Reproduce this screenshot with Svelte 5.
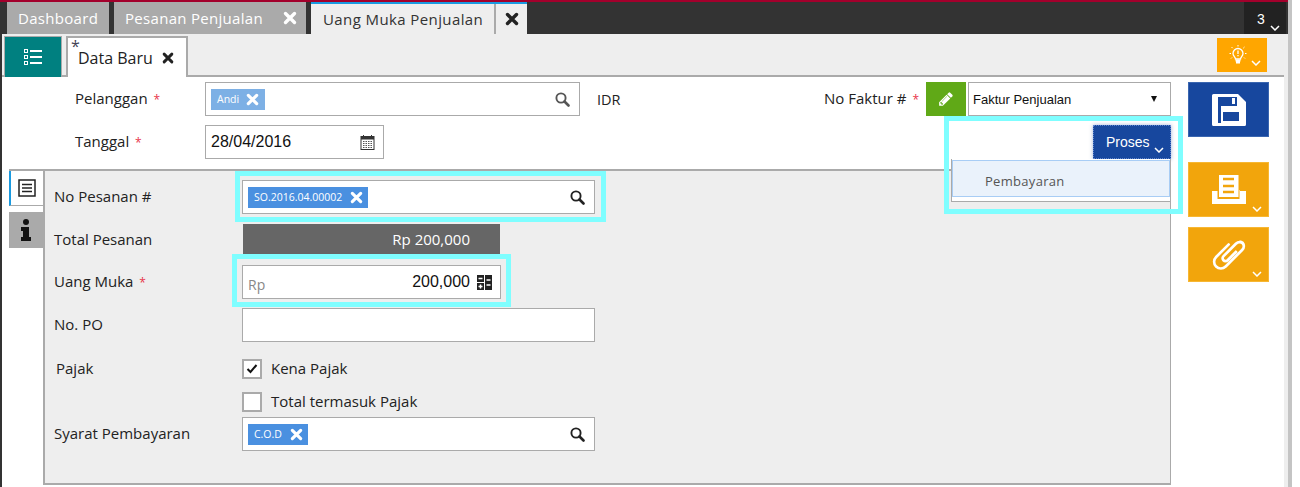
<script>
  const chev = 'M0 0l4 4 4-4';
</script>

{#snippet x(size, color)}
  <svg class="ico" width={size} height={size} viewBox="0 0 14 14"><path d="M2.500 2.500l9 9M11.500 2.500l-9 9" stroke={color} stroke-width="3.400" stroke-linecap="round" fill="none"/></svg>
{/snippet}
{#snippet chevron(cls)}
  <svg class="chev {cls}" width="10" height="6" viewBox="-1 -1 10 6"><path d={chev} stroke="#fff" stroke-width="1.500" fill="none"/></svg>
{/snippet}
{#snippet search(color)}
  <svg class="ico" width="15" height="15" viewBox="0 0 15 15"><circle cx="6" cy="6" r="4.600" stroke={color} stroke-width="1.900" fill="none"/><path d="M9.500 9.500l4 4" stroke={color} stroke-width="2.600" stroke-linecap="round"/></svg>
{/snippet}

<div class="frame">
  <div class="strip"></div>
  <header class="tabbar">
    <div class="tab t1">Dashboard</div>
    <div class="tab t2"><span>Pesanan Penjualan</span>{@render x(14, '#fff')}</div>
    <div class="active">
      <div class="a-label">Uang Muka Penjualan</div>
      <div class="a-close">{@render x(14, '#222')}</div>
    </div>
    <div class="count"><span>3</span>{@render chevron('c-count')}</div>
  </header>

  <div class="body">
    <div class="subbar">
      <button class="teal" aria-label="Daftar">
        <svg width="20" height="18" viewBox="0 0 20 18">
          <g fill="none" stroke="#fff"><rect x="1.500" y="1.500" width="3" height="3"/><rect x="1.500" y="7.500" width="3" height="3"/><rect x="1.500" y="13.500" width="3" height="3"/></g>
          <path d="M7 3h12M7 9h12M7 15h12" stroke="#fff" stroke-width="2"/>
        </svg>
      </button>
      <div class="subtab"><sup>*</sup><span>Data Baru</span>{@render x(12, '#222')}</div>
      <div class="bulb">
        <svg width="20" height="20" viewBox="0 0 20 20" fill="none" stroke="#fff">
          <path d="M7.500 14c0-2-2.500-3-2.500-5.500a5 5 0 0 1 10 0c0 2.500-2.500 3.500-2.500 5.500z" stroke-width="1.300"/>
          <path d="M10 5.500v3.500M10 10v1.300" stroke-width="1.300"/>
          <path d="M7.500 15.500h5M8 17.500h4" stroke-width="1.800"/>
          <path d="M10 0v1.500M3.500 2l1.200 1.200M16.500 2l-1.200 1.200M1.500 8.500h1.500M17 8.500h1.500M3 13.500l1-1M17 13.500l-1-1" stroke-width="1"/>
        </svg>
        {@render chevron('c-bulb')}
      </div>
    </div>

    <div class="content">
      <div class="main">
        <div class="toprow">
          <label class="tlabel">Pelanggan <em>*</em></label>
          <div class="box cust">
            <span class="tag light">Andi {@render x(13, '#fff')}</span>
            {@render search('#555')}
          </div>
          <span class="idr">IDR</span>
          <label class="nof">No Faktur # <em>*</em></label>
          <button class="pen" aria-label="Ubah">
            <svg width="16" height="16" viewBox="0 0 1792 1792"><path fill="#fff" d="M491 1536l91-91-235-235-91 91v107h128v128h107zm523-928q0-22-22-22-10 0-17 7l-542 542q-7 7-7 17 0 22 22 22 10 0 17-7l542-542q7-7 7-17zm-54-192l416 416-832 832h-416v-416zm683 96q0 53-37 90l-166 166-416-416 166-165q36-38 90-38 53 0 91 38l235 234q37 39 37 91z"/></svg>
          </button>
          <div class="box sel"><span>Faktur Penjualan</span><i class="tri"></i></div>
        </div>

        <div class="toprow second">
          <label class="tlabel">Tanggal <em>*</em></label>
          <div class="box date">
            <span>28/04/2016</span>
            <svg width="15" height="15" viewBox="0 0 15 15">
              <rect x="1" y="1.500" width="13" height="13" fill="#fff" stroke="#333"/>
              <rect x="1" y="1" width="13" height="3.500" fill="#333"/>
              <path d="M3.500 0v2M11.500 0v2" stroke="#333"/>
              <path d="M3 6.500h9M3 8.500h9M3 10.500h9M3 12.500h9" stroke="#555" stroke-dasharray="1.500 1"/>
            </svg>
          </div>
          <div class="proses-wrap">
            <button class="proses">Proses {@render chevron('c-proses')}</button>
            <div class="menu"><div class="item">Pembayaran</div></div>
            <div class="hl hl-proses"></div>
          </div>
        </div>

        <div class="panelwrap">
          <nav class="vtabs">
            <div class="vt on">
              <svg width="18" height="18" viewBox="0 0 18 18" fill="none" stroke="#222"><rect x="1" y="1" width="16" height="16" stroke-width="1.500"/><path d="M4 5.500h10M4 9h10M4 12.500h10" stroke-width="1.400"/></svg>
            </div>
            <div class="vt off">
              <svg width="12" height="22" viewBox="0 0 12 22" fill="#111"><circle cx="6" cy="3" r="3"/><path d="M1 8h8v10h2v4H1v-4h2v-6H1z"/></svg>
            </div>
          </nav>
          <section class="panel">
            <div class="row r1">
              <label class="plabel">No Pesanan #</label>
              <div class="hlwrap">
                <div class="box wide">
                  <span class="tag so">SO.2016.04.00002 {@render x(13, '#fff')}</span>
                  {@render search('#222')}
                </div>
                <div class="hl hl-so"></div>
              </div>
            </div>
            <div class="row r2">
              <label class="plabel">Total Pesanan</label>
              <div class="total">Rp 200,000</div>
            </div>
            <div class="row r3">
              <label class="plabel">Uang Muka <em>*</em></label>
              <div class="hlwrap">
                <div class="box money">
                  <span class="rp">Rp</span>
                  <span class="amt">200,000</span>
                  <svg width="15" height="15" viewBox="0 0 15 15" fill="#222"><rect x="0" y="0" width="7" height="7"/><rect x="8" y="0" width="7" height="15"/><rect x="0" y="8" width="7" height="7"/><path d="M1.500 3.500h4M9.500 5h4M9.500 10h4M1.500 11.500h4M3.500 9.500v4" stroke="#fff" stroke-width="1.500"/></svg>
                </div>
                <div class="hl hl-um"></div>
              </div>
            </div>
            <div class="row r4">
              <label class="plabel">No. PO</label>
              <div class="box wide"></div>
            </div>
            <div class="row r5">
              <label class="plabel pj">Pajak</label>
              <span class="cb"><svg width="12" height="10" viewBox="0 0 12 10"><path d="M1.500 5l3 3 6-7" stroke="#111" stroke-width="2" fill="none"/></svg></span>
              <span class="cbt">Kena Pajak</span>
            </div>
            <div class="row r6">
              <span class="plabel"></span>
              <span class="cb"></span>
              <span class="cbt">Total termasuk Pajak</span>
            </div>
            <div class="row r7">
              <label class="plabel">Syarat Pembayaran</label>
              <div class="box wide">
                <span class="tag cod">C.O.D {@render x(13, '#fff')}</span>
                {@render search('#222')}
              </div>
            </div>
          </section>
        </div>
      </div>

      <aside class="side">
        <button class="act save" aria-label="Simpan">
          <svg width="34" height="32" viewBox="0 0 34 32">
            <path fill="#fff" d="M1.500 0H26l8 8v22.500a1.500 1.500 0 0 1-1.500 1.500h-31A1.500 1.500 0 0 1 0 30.500v-29A1.500 1.500 0 0 1 1.500 0z"/>
            <path fill="#17479e" d="M6 3h19v9h5v17H6z"/>
            <path fill="#fff" d="M9 12h21v17H9z"/>
            <rect x="11" y="18" width="16" height="9" fill="#17479e"/>
            <rect x="20" y="4" width="3" height="6" fill="#fff"/>
          </svg>
        </button>
        <button class="act print" aria-label="Cetak">
          <svg width="34" height="29" viewBox="0 0 34 29">
            <path fill="#fff" d="M0 16h6v-1h22v1h6v13H0z"/>
            <rect x="5.500" y="0" width="22" height="24" fill="#f2a50c"/>
            <rect x="7" y="0" width="19.500" height="22" fill="#fff"/>
            <path d="M11 4h11M11 11h11M11 17h11" stroke="#f2a50c" stroke-width="2.400"/>
          </svg>
          {@render chevron('c-act')}
        </button>
        <button class="act clip" aria-label="Lampiran">
          <svg width="38" height="38" viewBox="0 0 1792 1792"><path fill="#fff" transform="matrix(0 -1 1 0 0 1792)" d="M1596 1385q0 117-79 196t-196 79q-135 0-235-100l-777-776q-113-115-113-271 0-159 110-270t269-111q158 0 273 113l605 606q10 10 10 22 0 16-30.500 46.500t-46.500 30.500q-13 0-23-10l-606-607q-79-77-181-77-106 0-179 75t-73 181q0 105 76 181l776 777q63 63 134 63 57 0 95-38t38-95q0-74-63-134l-581-582q-26-24-60-24-29 0-48 19t-19 48q0 32 25 59l410 410q10 10 10 22 0 16-31 47t-47 31q-12 0-22-10l-410-410q-63-61-63-149 0-82 57-139t139-57q88 0 149 63l581 581q100 98 100 235z"/></svg>
          {@render chevron('c-act')}
        </button>
      </aside>
    </div>
  </div>
</div>

<style>
  :global(body) { margin: 0; background: #fff; }
  * { box-sizing: border-box; }
  .frame {
    width: 1292px; height: 487px; overflow: hidden;
    border-right: 4px solid #c4c4c4;
    font-family: "Open Sans", "Noto Sans", sans-serif; font-size: 15px; color: #222;
    background: #fff;
  }
  .strip { height: 2px; background: #a3002c; }
  .tabbar { height: 32px; background: #333; display: flex; padding-left: 7px; }
  .tab {
    background: #aaa; color: #fff; height: 32px; display: flex; align-items: center;
    font-size: 15px; letter-spacing: .3px; padding-left: 11px;
  }
  .t1 { width: 102px; }
  .t2 { width: 192px; margin-left: 5px; gap: 20px; }
  .active { display: flex; margin-left: 5px; height: 32px; background: #eee; border-top: 2px solid #1a9ae0; }
  .a-label { width: 183px; padding-left: 12px; font-size: 15px; letter-spacing: .4px; color: #333; line-height: 30px; }
  .a-close { width: 33px; border-left: 2px solid #aaa; display: flex; align-items: center; justify-content: center; }
  .count {
    margin-left: auto; width: 42px; background: #222; color: #fff; font-size: 14px;
    position: relative; margin-right: 2px; padding: 9px 0 0 13px; line-height: 16px;
    font-family: "Liberation Sans", sans-serif;
  }
  .body { border-left: 2px solid #333; border-right: 4px solid #eee; height: 453px; }
  .subbar {
    height: 43px; background: #eee; border-bottom: 2px solid #aaa; display: flex; padding: 2px 0 0 2px;
  }
  .teal {
    width: 58px; height: 41px; background: #008080; border: 1px solid #aaa; border-width: 1px 1px 0; padding: 0;
    display: flex; align-items: center; justify-content: center;
  }
  .subtab {
    width: 122px; height: 41px; margin-left: 4px; background: #fff;
    border: 2px solid #aaa; border-bottom: 0; display: flex; align-items: center; font-size: 16px; padding-left: 4px; position: relative;
  }
  .subtab sup { position: absolute; left: 3px; top: -3px; font-size: 16px; color: #445; }
  .subtab span { margin-left: 6px; margin-right: 9px; }
  .bulb {
    margin-left: auto; margin-right: 17px; margin-top: 2px; width: 50px; height: 34px; background: #ffa600;
    display: flex; align-items: center; padding-left: 11px; position: relative;
  }
  .content { display: flex; height: 410px; }
  .main { width: 1169px; padding-top: 5px; }
  .toprow { display: flex; align-items: center; height: 34px; padding-left: 73px; }
  .second { margin-top: 9px; }
  label, .plabel { font-size: 15px; }
  em { color: #e8344a; font-style: normal; font-size: 12px; margin-left: 2px; }
  .tlabel { width: 130px; padding-bottom: 2px; }
  .box {
    height: 34px; background: #fff; border: 1px solid #aaa; display: flex; align-items: center; justify-content: space-between;
  }
  .cust { width: 375px; padding: 0 9px 0 5px; }
  .idr { margin-left: 17px; font-size: 14.500px; }
  .nof { margin-left: auto; margin-right: 7px; padding-bottom: 2px; }
  .pen { width: 40px; height: 34px; background: #60a917; border: 0; padding: 0; display: flex; align-items: center; justify-content: center; }
  .sel { width: 203px; margin-left: 2px; padding: 0 13px 0 4px; font-family: "Liberation Sans", sans-serif; font-size: 13px; color: #111; }
  .tri { width: 0; height: 0; border: 3.500px solid transparent; border-top: 6px solid #111; border-bottom: 0; }
  .date { width: 179px; padding: 0 8px 0 5px; font-family: "Liberation Sans", sans-serif; font-size: 16px; color: #111; }
  .proses-wrap { margin-left: auto; position: relative; height: 34px; }
  .proses {
    width: 78px; height: 34px; background: #17479e; color: #fff; border: 1px dotted #5f86d0; padding: 0 0 0 12px;
    font-family: "Liberation Sans", sans-serif; font-size: 14px; text-align: left; position: relative;
    box-shadow: 0 0 4px rgba(23, 71, 158, .4);
  }
  .menu {
    position: absolute; top: 34px; right: 0; width: 220px; height: 43px; background: #fff;
    border: 1px solid #aaa; border-top: 0; padding-top: 1px; z-index: 2;
  }
  .item {
    height: 37px; background: #eaf2fb; border: 1px solid #a8cdf5; color: #555; font-size: 13px; letter-spacing: .3px;
    padding: 11px 0 0 32px;
  }
  .hl { position: absolute; border: 5px solid #7ffeff; pointer-events: none; z-index: 3; }
  .hl-proses { left: -149px; right: -12px; top: -9px; bottom: -55px; }
  .hlwrap { position: relative; }
  .hl-so { left: -7px; right: -11px; top: -9px; bottom: -8px; }
  .hl-um { left: -10px; right: -10px; top: -11px; bottom: -8px; }

  .panelwrap { display: flex; margin-top: 10px; padding-left: 7px; height: 316px; position: relative; }
  .vtabs { width: 34px; border-top: 2px solid #aaa; }
  .vt { width: 34px; display: flex; align-items: center; justify-content: center; }
  .on { height: 35px; background: #fff; border-left: 2px solid #1a9ae0; border-bottom: 1px solid #aaa; }
  .off { height: 36px; margin-top: 6px; background: #aaa; }
  .panel {
    width: 1128px; height: 316px; background: #eee; border: 2px solid #aaa; border-width: 2px 1px 2px 2px; padding: 9px 0 0 9px;
  }
  .row { display: flex; align-items: center; }
  .plabel { width: 188px; flex: none; padding-bottom: 2px; }
  .pj { padding-left: 2px; }
  .wide { width: 353px; padding: 0 9px 0 5px; }
  .total {
    width: 257px; height: 31px; margin-left: 1px; background: #666; color: #fff; text-align: right; padding: 5px 30px 0 0; font-size: 15px; line-height: 20px;
  }
  .money { width: 259px; padding: 0 8px 0 5px; font-family: "Liberation Sans", sans-serif; }
  .rp { color: #888; font-size: 14px; padding-top: 5px; font-family: "Open Sans", sans-serif; }
  .amt { margin-left: auto; margin-right: 7px; font-size: 16px; color: #111; }
  .r2 { margin-top: 10px; }
  .r3 { margin-top: 10px; }
  .r4 { margin-top: 9px; }
  .r5 { margin-top: 17px; height: 20px; }
  .r6 { margin-top: 13px; height: 20px; }
  .r7 { margin-top: 5px; }
  .cb { width: 20px; height: 20px; background: #fff; border: 2px solid #aaa; display: flex; align-items: center; justify-content: center; flex: none; }
  .cbt { margin-left: 9px; padding-bottom: 3px; }
  .tag { display: inline-flex; align-items: center; gap: 7px; height: 21px; color: #fff; padding: 0 4px 0 6px; font-size: 10.500px; }
  .light { background: #7db0e5; width: 54px; }
  .so { background: #4a90e0; width: 120px; gap: 8px; }
  .cod { background: #4a90e0; width: 60px; gap: 8px; }
  .ico { flex: none; display: block; }

  .side { margin-left: 17px; padding-top: 5px; display: flex; flex-direction: column; width: 81px; }
  .act { width: 81px; height: 55px; border: 1px solid; padding: 0; display: flex; align-items: center; justify-content: center; position: relative; }
  .save { background: #17479e; border-color: #3a66b0; }
  .print { background: #f2a50c; border-color: #f7b733; margin-top: 25px; }
  .clip { background: #f2a50c; border-color: #f7b733; margin-top: 10px; }
  .chev { position: absolute; }
  .c-count { right: 6px; bottom: 3px; }
  .c-bulb { right: 6px; bottom: 6px; }
  .c-proses { right: 6px; bottom: 5px; }
  .c-act { right: 6px; bottom: 4px; }
</style>
